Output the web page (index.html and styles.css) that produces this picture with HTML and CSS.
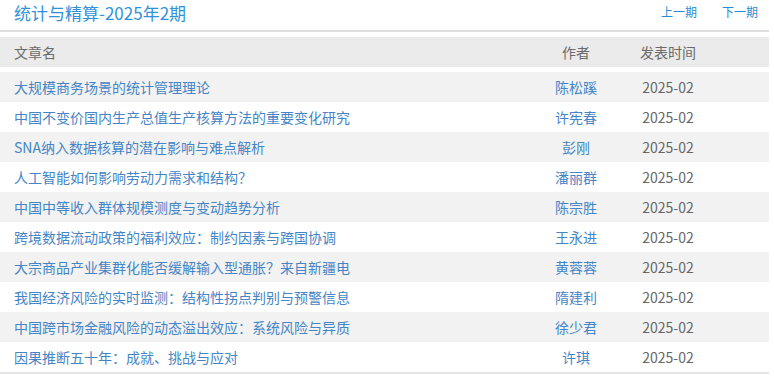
FILE: index.html
```html
<!DOCTYPE html>
<html lang="zh-CN">
<head>
<meta charset="utf-8">
<title>统计与精算-2025年2期</title>
<link rel="stylesheet" href="styles.css">
</head>
<body>
<div class="page">
  <div class="topbar">
    <div class="issue-title">统计与精算-2025年2期</div>
    <div class="issue-nav">
      <a href="#">上一期</a>
      <a href="#">下一期</a>
    </div>
  </div>
  <div class="thead row">
    <div class="c-title">文章名</div>
    <div class="c-author">作者</div>
    <div class="c-date">发表时间</div>
  </div>
  <div class="tbody">
    <div class="row"><a class="c-title" href="#">大规模商务场景的统计管理理论</a><a class="c-author" href="#">陈松蹊</a><div class="c-date">2025-02</div></div>
    <div class="row"><a class="c-title" href="#">中国不变价国内生产总值生产核算方法的重要变化研究</a><a class="c-author" href="#">许宪春</a><div class="c-date">2025-02</div></div>
    <div class="row"><a class="c-title" href="#">SNA纳入数据核算的潜在影响与难点解析</a><a class="c-author" href="#">彭刚</a><div class="c-date">2025-02</div></div>
    <div class="row"><a class="c-title" href="#">人工智能如何影响劳动力需求和结构？</a><a class="c-author" href="#">潘丽群</a><div class="c-date">2025-02</div></div>
    <div class="row"><a class="c-title" href="#">中国中等收入群体规模测度与变动趋势分析</a><a class="c-author" href="#">陈宗胜</a><div class="c-date">2025-02</div></div>
    <div class="row"><a class="c-title" href="#">跨境数据流动政策的福利效应：制约因素与跨国协调</a><a class="c-author" href="#">王永进</a><div class="c-date">2025-02</div></div>
    <div class="row"><a class="c-title" href="#">大宗商品产业集群化能否缓解输入型通胀？来自新疆电</a><a class="c-author" href="#">黄蓉蓉</a><div class="c-date">2025-02</div></div>
    <div class="row"><a class="c-title" href="#">我国经济风险的实时监测：结构性拐点判别与预警信息</a><a class="c-author" href="#">隋建利</a><div class="c-date">2025-02</div></div>
    <div class="row"><a class="c-title" href="#">中国跨市场金融风险的动态溢出效应：系统风险与异质</a><a class="c-author" href="#">徐少君</a><div class="c-date">2025-02</div></div>
    <div class="row"><a class="c-title" href="#">因果推断五十年：成就、挑战与应对</a><a class="c-author" href="#">许琪</a><div class="c-date">2025-02</div></div>
  </div>
</div>
</body>
</html>
```

FILE: styles.css
```css
html, body {
  margin: 0;
  padding: 0;
  background: #fff;
}
body {
  font-family: "Noto Sans CJK SC", "Noto Sans", sans-serif;
  font-size: 14px;
  color: #666;
}
a {
  text-decoration: none;
}
.page {
  width: 769px;
}
.topbar {
  height: 30px;
  border-bottom: 2px solid #dedede;
  display: flex;
  align-items: center;
  justify-content: space-between;
  padding: 0 11px 0 14px;
}
.issue-title {
  font-size: 17px;
  color: #3192d8;
  line-height: 1;
  margin-top: -5px;
}
.issue-nav {
  display: flex;
  gap: 25px;
  margin-top: -6px;
}
.issue-nav a {
  font-size: 12px;
  color: #2a8bd2;
  line-height: 1;
}
.row {
  display: grid;
  grid-template-columns: 538px 76px 108px 1fr;
  align-items: center;
  height: 30px;
  line-height: 30px;
}
.thead {
  margin-top: 5px;
  background: #ebebeb;
  color: #6a6a6a;
}
.tbody {
  margin-top: 5px;
  border-bottom: 2px solid #e3e3e3;
}
.tbody .row:nth-child(odd) {
  background: #f2f2f2;
}
.c-title {
  padding-left: 14px;
  white-space: nowrap;
  overflow: hidden;
}
.tbody .c-title,
.tbody .c-author {
  color: #4585c6;
}
.c-author,
.c-date {
  text-align: center;
}
.tbody .c-date {
  color: #666;
}
```
